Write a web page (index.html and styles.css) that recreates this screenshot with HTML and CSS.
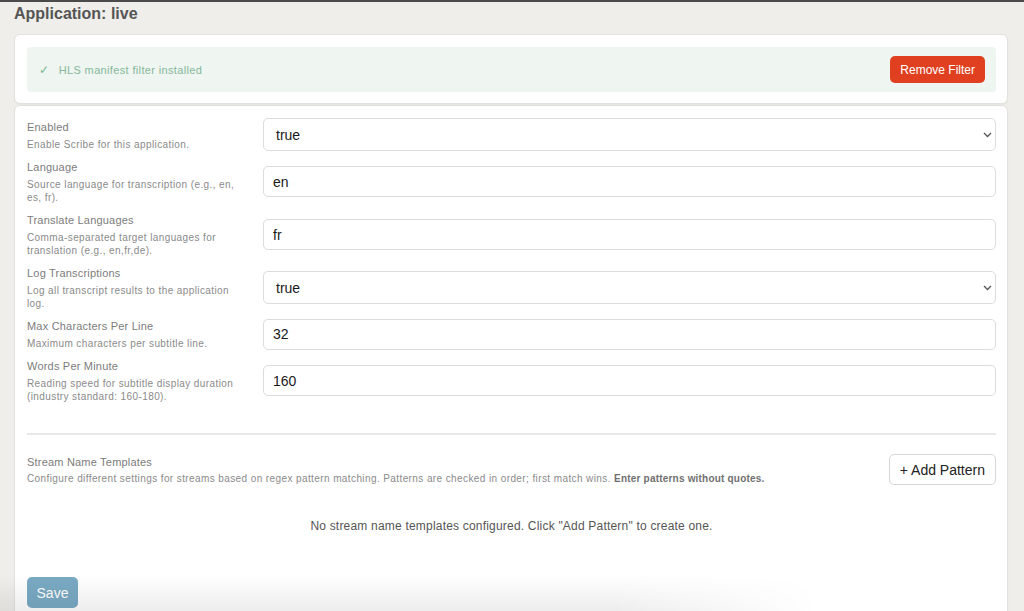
FILE: index.html
```html
<!doctype html>
<html lang="en">
  <head>
    <meta charset="UTF-8" />
    <meta name="viewport" content="width=device-width, initial-scale=1.0" />
    <title>Scribe - Application: live</title>
    <link rel="stylesheet" href="styles.css">
  </head>
  <body>
    <h2 class="page-title">Application: live</h2>

    <div class="card filter-card">
      <div class="alert-success">
        <span class="alert-text"><span class="check">&#10003;</span> HLS manifest filter installed</span>
        <button class="btn-danger">Remove Filter</button>
      </div>
    </div>

    <div class="card settings-card">
      <div class="form-row">
        <div class="field-info">
          <div class="field-label">Enabled</div>
          <div class="field-desc">Enable Scribe for this application.</div>
        </div>
        <div class="select-wrap">
          <select class="form-control">
            <option>true</option>
            <option>false</option>
          </select>
          <svg class="chevron" width="9" height="6" viewBox="0 0 9 6"><path d="M1 1l3.5 3.5L8 1" fill="none" stroke="#555" stroke-width="1.3"/></svg>
        </div>
      </div>

      <div class="form-row">
        <div class="field-info">
          <div class="field-label">Language</div>
          <div class="field-desc">Source language for transcription (e.g., en, es, fr).</div>
        </div>
        <input class="form-control" type="text" value="en" />
      </div>

      <div class="form-row">
        <div class="field-info">
          <div class="field-label">Translate Languages</div>
          <div class="field-desc">Comma-separated target languages for translation (e.g., en,fr,de).</div>
        </div>
        <input class="form-control" type="text" value="fr" />
      </div>

      <div class="form-row">
        <div class="field-info">
          <div class="field-label">Log Transcriptions</div>
          <div class="field-desc">Log all transcript results to the application log.</div>
        </div>
        <div class="select-wrap">
          <select class="form-control">
            <option>true</option>
            <option>false</option>
          </select>
          <svg class="chevron" width="9" height="6" viewBox="0 0 9 6"><path d="M1 1l3.5 3.5L8 1" fill="none" stroke="#555" stroke-width="1.3"/></svg>
        </div>
      </div>

      <div class="form-row">
        <div class="field-info">
          <div class="field-label">Max Characters Per Line</div>
          <div class="field-desc">Maximum characters per subtitle line.</div>
        </div>
        <input class="form-control" type="number" value="32" />
      </div>

      <div class="form-row">
        <div class="field-info">
          <div class="field-label">Words Per Minute</div>
          <div class="field-desc">Reading speed for subtitle display duration (industry standard: 160-180).</div>
        </div>
        <input class="form-control" type="number" value="160" />
      </div>

      <hr class="divider" />

      <div class="templates-head">
        <div>
          <div class="field-label">Stream Name Templates</div>
          <div class="field-desc">Configure different settings for streams based on regex pattern matching. Patterns are checked in order; first match wins. <strong>Enter patterns without quotes.</strong></div>
        </div>
        <button class="btn-outline">+ Add Pattern</button>
      </div>

      <div class="empty-state">No stream name templates configured. Click "Add Pattern" to create one.</div>

      <button class="btn-save" disabled>Save</button>
    </div>

    <div class="bottom-fade"></div>
  </body>
</html>
```

FILE: styles.css
```css
body {
  font-family: "Liberation Sans", Arial, sans-serif;
  margin: 0;
  padding: 0 16px 0 14px;
  background: #efeeea;
  border-top: 2px solid #4b4b4b;
  color: #333;
}
.page-title {
  font-size: 16px;
  line-height: 20px;
  color: #555;
  margin: 2px 0 10px;
}
.card {
  background: #fff;
  border: 1px solid #e2e1dd;
  border-radius: 6px;
  box-shadow: 0 1px 2px rgba(0, 0, 0, 0.04);
}
.filter-card {
  padding: 12px 11px 11px 12px;
  margin-bottom: 1px;
}
.alert-success {
  display: flex;
  align-items: center;
  justify-content: space-between;
  height: 45px;
  box-sizing: border-box;
  padding: 0 11px 0 12px;
  background: #eff5f1;
  border-radius: 4px;
}
.alert-text {
  font-size: 11px;
  letter-spacing: 0.35px;
  color: #86b89a;
}
.check {
  margin-right: 6px;
  font-size: 12px;
  color: #7cb592;
}
.btn-danger {
  font-family: inherit;
  font-size: 12px;
  color: #fff;
  background: #e0401f;
  border: none;
  border-radius: 5px;
  height: 27px;
  padding: 0 10px;
}
.settings-card {
  padding: 12px 11px 40px 12px;
}
.form-row {
  display: flex;
  align-items: center;
  margin-bottom: 8px;
}
.field-info {
  flex: 0 0 236px;
  padding-right: 21px;
  box-sizing: border-box;
}
.field-label {
  font-size: 11px;
  line-height: 16px;
  letter-spacing: 0.2px;
  color: #7c7c7c;
}
.field-desc {
  font-size: 10px;
  line-height: 13px;
  letter-spacing: 0.4px;
  color: #8a8a8a;
  margin-top: 3px;
}
.field-desc strong {
  letter-spacing: 0.2px;
  color: #707070;
}
.form-control {
  flex: 1;
  width: 100%;
  box-sizing: border-box;
  height: 31px;
  padding: 0 9px;
  font-family: inherit;
  font-size: 14px;
  color: #1a1a1a;
  background: #fff;
  border: 1px solid #dcdcdc;
  border-radius: 5px;
  appearance: textfield;
}
.select-wrap {
  flex: 1;
  position: relative;
}
.select-wrap .form-control {
  height: 33px;
  padding-left: 12px;
  appearance: none;
}
.chevron {
  position: absolute;
  right: 4px;
  top: 14px;
}
.divider {
  border: none;
  border-top: 2px solid #e8e8e8;
  margin: 30px 0 19px;
}
.templates-head {
  display: flex;
  align-items: center;
  justify-content: space-between;
}
.templates-head .field-desc {
  margin-top: 2px;
}
.btn-outline {
  font-family: inherit;
  font-size: 14px;
  color: #222;
  background: #fff;
  border: 1px solid #d6d6d6;
  border-radius: 5px;
  height: 31px;
  padding: 0 10px;
}
.empty-state {
  text-align: center;
  font-size: 12px;
  line-height: 16px;
  letter-spacing: 0.2px;
  color: #555;
  padding: 33px 0 43px;
}
.btn-save {
  font-family: inherit;
  font-size: 14px;
  color: #fff;
  background: #7aaac4;
  border: none;
  border-radius: 5px;
  width: 51px;
  height: 31px;
}
.bottom-fade {
  position: fixed;
  left: 0;
  bottom: 0;
  width: 100%;
  height: 36px;
  pointer-events: none;
  background: linear-gradient(to bottom, rgba(0, 0, 0, 0), rgba(0, 0, 0, 0.07));
  -webkit-mask-image: linear-gradient(to right, #000 60%, transparent 80%);
  mask-image: linear-gradient(to right, #000 60%, transparent 80%);
}
```
